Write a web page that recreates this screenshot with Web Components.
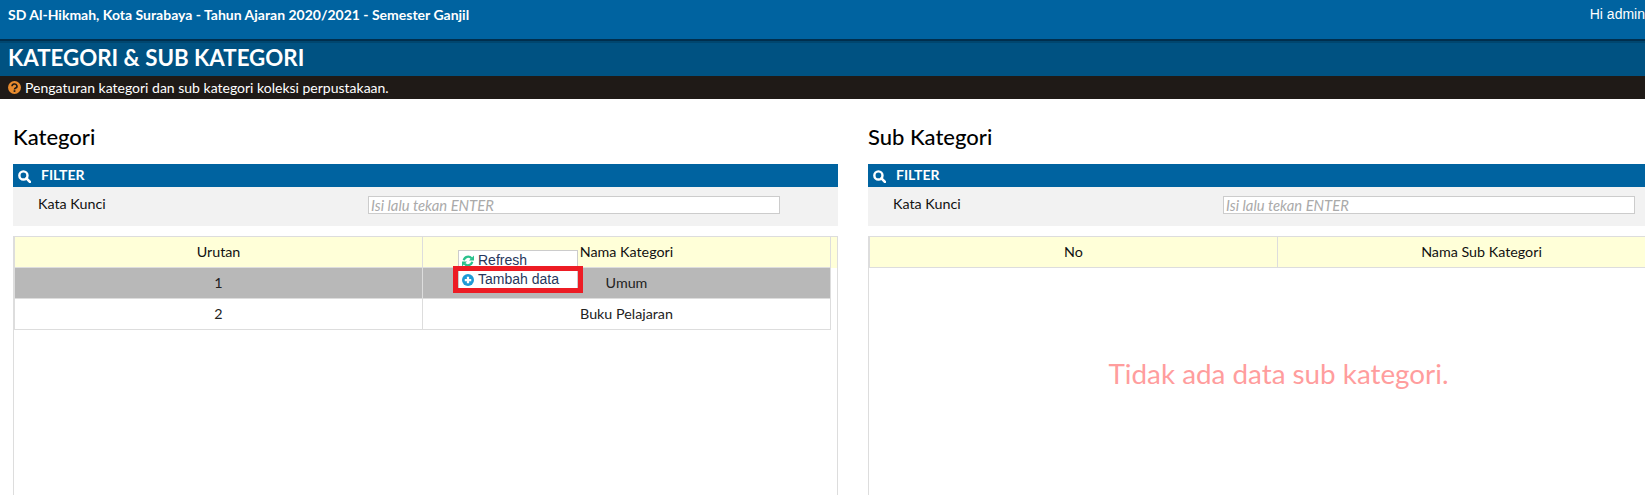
<!DOCTYPE html>
<html>
<head>
<meta charset="utf-8">
<title>Kategori & Sub Kategori</title>
<style>
html, body { margin: 0; padding: 0; background: #fff; overflow: hidden; }
body { font-family: Lato, sans-serif; width: 1645px; height: 495px; }
</style>
</head>
<body>
<app-topbar school="SD Al-Hikmah, Kota Surabaya - Tahun Ajaran 2020/2021 - Semester Ganjil" user="Hi admin"></app-topbar>
<page-header title="KATEGORI &amp; SUB KATEGORI" hint="Pengaturan kategori dan sub kategori koleksi perpustakaan."></page-header>
<page-columns>
  <data-panel heading="Kategori">
    <filter-box></filter-box>
    <data-table first="Urutan" second="Nama Kategori">
      <table-row first="1" second="Umum" selected></table-row>
      <table-row first="2" second="Buku Pelajaran"></table-row>
      <context-menu slot="over"></context-menu>
    </data-table>
  </data-panel>
  <data-panel heading="Sub Kategori">
    <filter-box></filter-box>
    <data-table first="No" second="Nama Sub Kategori">
      <empty-note>Tidak ada data sub kategori.</empty-note>
    </data-table>
  </data-panel>
</page-columns>

<script>
class AppTopbar extends HTMLElement {
  constructor() {
    super();
    this.attachShadow({ mode: 'open' });
    this.shadowRoot.innerHTML = `
      <style>
        :host { display: flex; justify-content: space-between; height: 39px; background: #0063a0; color: #fff; font: 700 14px Lato, sans-serif; }
        span { line-height: 15px; padding: 7px 8px 0; }
        .user { font: 400 14px/15px "Liberation Sans", sans-serif; padding-right: 0; }
      </style>
      <span>${this.getAttribute('school')}</span>
      <span class="user">${this.getAttribute('user')}</span>`;
  }
}

class PageHeader extends HTMLElement {
  constructor() {
    super();
    this.attachShadow({ mode: 'open' });
    this.shadowRoot.innerHTML = `
      <style>
        :host { display: block; }
        .title { height: 35px; border-top: 2px solid #002f4e; background: #005282; color: #fff; font: 700 22.3px/34px Lato, sans-serif; padding-left: 8px; box-shadow: inset 0 2px 0 #00466f; }
        .hint { display: flex; align-items: center; gap: 4px; height: 23px; background: #1f1a17; color: #fff; font: 400 14px Lato, sans-serif; padding-left: 8px; }
        svg { width: 13px; height: 13px; }
      </style>
      <div class="title">${this.getAttribute('title')}</div>
      <div class="hint">
        <svg viewBox="0 0 24 24"><circle cx="12" cy="12" r="12" fill="#e88b2e"/><path d="M7.5 9.5a4.5 4 0 1 1 6.6 3.5c-1.4.8-2.1 1.3-2.1 2.5" fill="none" stroke="#1f1a17" stroke-width="3"/><rect x="10.4" y="17" width="3.2" height="3.2" fill="#1f1a17"/></svg>
        <span>${this.getAttribute('hint')}</span>
      </div>`;
  }
}

class PageColumns extends HTMLElement {
  constructor() {
    super();
    this.attachShadow({ mode: 'open' });
    this.shadowRoot.innerHTML = `
      <style>
        :host { display: grid; grid-template-columns: 825px 825px; gap: 30px; padding: 0 13px; height: 396px; overflow: hidden; }
      </style>
      <slot></slot>`;
  }
}

class DataPanel extends HTMLElement {
  constructor() {
    super();
    this.attachShadow({ mode: 'open' });
    this.shadowRoot.innerHTML = `
      <style>
        :host { display: flex; flex-direction: column; min-width: 0; }
        h2 { margin: 0; font: 500 22px/26px Lato, sans-serif; color: #000; padding-top: 25px; height: 40px; }
      </style>
      <h2>${this.getAttribute('heading')}</h2>
      <slot></slot>`;
  }
}

class FilterBox extends HTMLElement {
  constructor() {
    super();
    this.attachShadow({ mode: 'open' });
    this.shadowRoot.innerHTML = `
      <style>
        :host { display: block; margin-bottom: 10px; }
        .head { display: flex; align-items: center; gap: 10px; height: 23px; box-sizing: border-box; padding: 0 0 2px 5px; background: #0063a0; color: #fff; font: 700 14px Lato, sans-serif; }
        svg { width: 13px; height: 13px; margin-top: 3px; }
        .body { display: grid; grid-template-columns: 330px 412px; height: 39px; background: #f2f2f2; padding-left: 25px; color: #111; font: 400 14.3px Lato, sans-serif; }
        label { line-height: 17px; padding-top: 8px; }
        .field { margin-top: 9px; height: 18px; box-sizing: border-box; border: 1px solid #ccc; background: #fff; color: #aaa; font: italic 14.8px/16px Lato, sans-serif; padding-left: 2px; }
      </style>
      <div class="head">
        <svg viewBox="0 0 24 24"><circle cx="10" cy="10" r="7.5" fill="none" stroke="#fff" stroke-width="4.5"/><path d="M15.5 15.5L22 22" stroke="#fff" stroke-width="5" stroke-linecap="round"/></svg>
        <span>FILTER</span>
      </div>
      <div class="body">
        <label>Kata Kunci</label>
        <div class="field">Isi lalu tekan ENTER</div>
      </div>`;
  }
}

class DataTable extends HTMLElement {
  constructor() {
    super();
    this.attachShadow({ mode: 'open' });
    this.shadowRoot.innerHTML = `
      <style>
        :host { display: block; position: relative; flex: 1; box-sizing: border-box; border: 1px solid #ddd; border-bottom: 0; }
        .head { display: grid; grid-template-columns: 408px 408px 1fr; height: 31px; background: #ffffd8; color: #111; font: 400 14.3px/30px Lato, sans-serif; text-align: center; }
        .head span { box-sizing: border-box; border-left: 1px solid #ddd; border-bottom: 1px solid #ddd; }
        .head .gutter { border-bottom: 0; }
      </style>
      <div class="head"><span>${this.getAttribute('first')}</span><span>${this.getAttribute('second')}</span><span class="gutter"></span></div>
      <slot></slot>
      <slot name="over"></slot>`;
  }
}

class TableRow extends HTMLElement {
  constructor() {
    super();
    this.attachShadow({ mode: 'open' });
    this.shadowRoot.innerHTML = `
      <style>
        :host { display: grid; grid-template-columns: 408px 408px 1px; width: 817px; height: 31px; box-sizing: border-box; border-bottom: 1px solid #ddd; color: #222; font: 400 14.3px/29px Lato, sans-serif; text-align: center; }
        :host([selected]) { background: linear-gradient(#b8b8b8, #b8b8b8) no-repeat 0 0 / 816px 100%; }
        span { border-left: 1px solid #ddd; }
      </style>
      <span>${this.getAttribute('first')}</span><span>${this.getAttribute('second')}</span><span></span>`;
  }
}

class ContextMenu extends HTMLElement {
  constructor() {
    super();
    this.attachShadow({ mode: 'open' });
    this.shadowRoot.innerHTML = `
      <style>
        :host { position: absolute; left: 444px; top: 13px; width: 120px; box-sizing: border-box; background: #fff; border: 1px solid #ccc; color: #27375c; font: 400 14px/17px "Liberation Sans", sans-serif; }
        div { display: flex; align-items: center; gap: 4px; height: 19px; padding-left: 3px; }
        svg { width: 12px; height: 12px; flex: none; }
        .mark { position: absolute; left: -6px; top: 15px; width: 130px; height: 27px; box-sizing: border-box; border: 5px solid #ed1c24; }
      </style>
      <div>
        <svg viewBox="0 0 24 24"><path d="M3.5 10.500a9 9 0 0 1 15.500-4" fill="none" stroke="#2bc18c" stroke-width="4.500"/><path d="M24 1v10H14z" fill="#2bc18c"/><path d="M20.500 13.500a9 9 0 0 1-15.500 4" fill="none" stroke="#2bc18c" stroke-width="4.500"/><path d="M0 23V13h10z" fill="#2bc18c"/></svg>
        <span>Refresh</span>
      </div>
      <div>
        <svg viewBox="0 0 24 24"><circle cx="12" cy="12" r="12" fill="#1e9ad6"/><path d="M12 5.500v13M5.500 12h13" stroke="#fff" stroke-width="4.500"/></svg>
        <span>Tambah data</span>
      </div>
      <span class="mark"></span>`;
  }
}

class EmptyNote extends HTMLElement {
  constructor() {
    super();
    this.attachShadow({ mode: 'open' });
    this.shadowRoot.innerHTML = `
      <style>
        :host { display: block; text-align: center; padding: 89px 4px 0 0; color: #ff9d9d; font: 400 27.8px/34px Lato, sans-serif; }
      </style>
      <slot></slot>`;
  }
}

customElements.define('app-topbar', AppTopbar);
customElements.define('page-header', PageHeader);
customElements.define('page-columns', PageColumns);
customElements.define('data-panel', DataPanel);
customElements.define('filter-box', FilterBox);
customElements.define('data-table', DataTable);
customElements.define('table-row', TableRow);
customElements.define('context-menu', ContextMenu);
customElements.define('empty-note', EmptyNote);
</script>
</body>
</html>
